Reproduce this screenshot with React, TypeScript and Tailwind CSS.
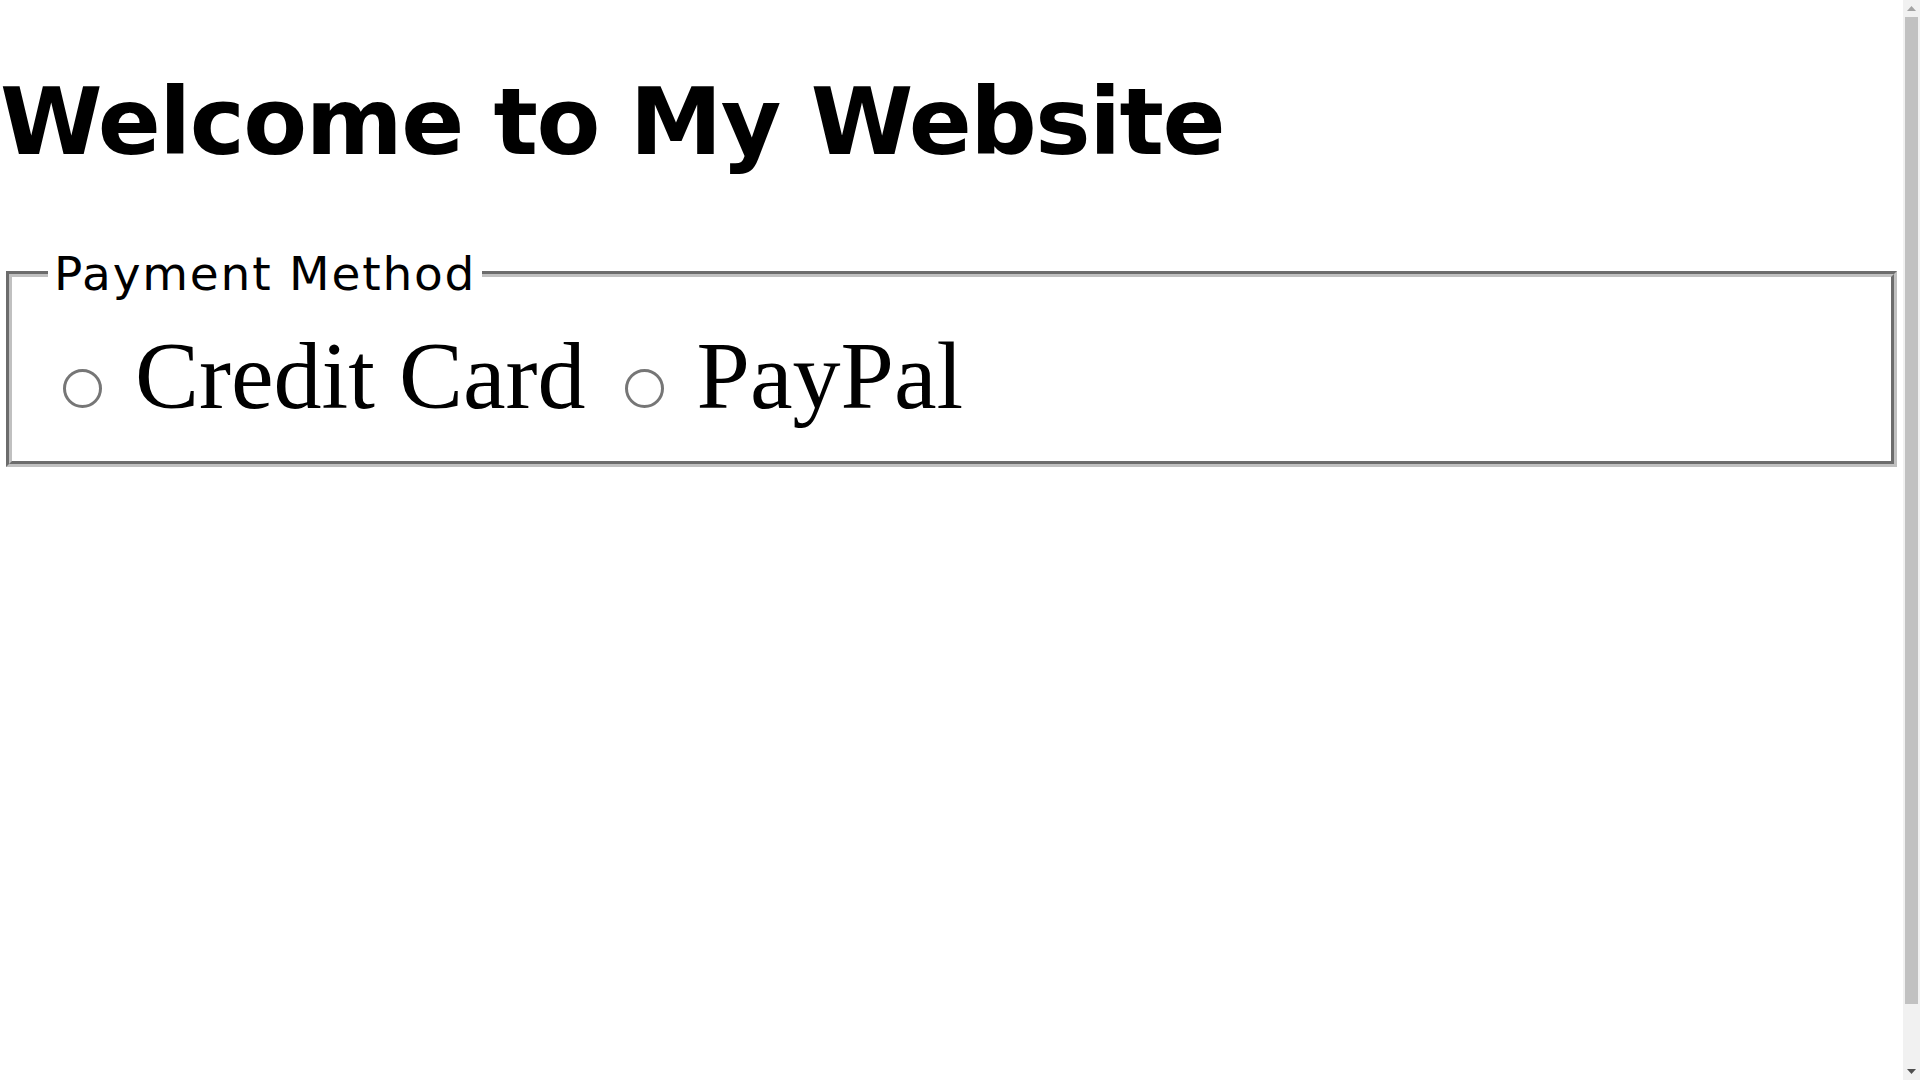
function Scrollbar() {
  return (
    <div className="flex w-[17px] shrink-0 flex-col bg-[#f1f1f1]">
      <div className="flex h-[17px] items-center justify-center">
        <svg width="9" height="5" viewBox="0 0 9 5">
          <path d="M0 5 L4.5 0 L9 5 Z" fill="#a3a3a3" />
        </svg>
      </div>
      <div className="mx-[2px] h-[987px] bg-[#c1c1c1]" />
      <div className="flex-1" />
      <div className="flex h-[17px] items-center justify-center">
        <svg width="9" height="5" viewBox="0 0 9 5">
          <path d="M0 0 L9 0 L4.5 5 Z" fill="#505050" />
        </svg>
      </div>
    </div>
  );
}

export default function App() {
  return (
    <div className="flex h-[1080px] overflow-hidden bg-white text-black">
      <main className="min-w-0 flex-1">
        <h1 className="mt-[64px] mb-[64px] whitespace-nowrap font-['DejaVu_Sans',sans-serif] text-[93px] leading-[117px] font-bold tracking-[-1.5px]">
          Welcome to My Website
        </h1>

        <fieldset className="mx-[6px] border-[6px] [border-style:groove] border-[#c0c0c0] px-[36px] pt-[17px] pb-[30px] font-['Liberation_Serif',serif] text-[96px] leading-[110px]">
          <legend className="pl-[6px] pr-[6px] font-['DejaVu_Sans',sans-serif] text-[47px] leading-[58.5px] font-normal tracking-[1.8px]">
            Payment Method
          </legend>
          <input
            type="radio"
            name="payment"
            id="credit"
            className="mt-[9px] mr-[9px] mb-0 ml-[15px] inline-block h-[39px] w-[39px] appearance-none rounded-full border-[3px] border-[#767676] bg-white"
          />{" "}
          <label htmlFor="credit">Credit Card</label>{" "}
          <input
            type="radio"
            name="payment"
            id="paypal"
            className="mt-[9px] mr-[9px] mb-0 ml-[15px] inline-block h-[39px] w-[39px] appearance-none rounded-full border-[3px] border-[#767676] bg-white"
          />{" "}
          <label htmlFor="paypal">PayPal</label>
        </fieldset>
      </main>
      <Scrollbar />
    </div>
  );
}
